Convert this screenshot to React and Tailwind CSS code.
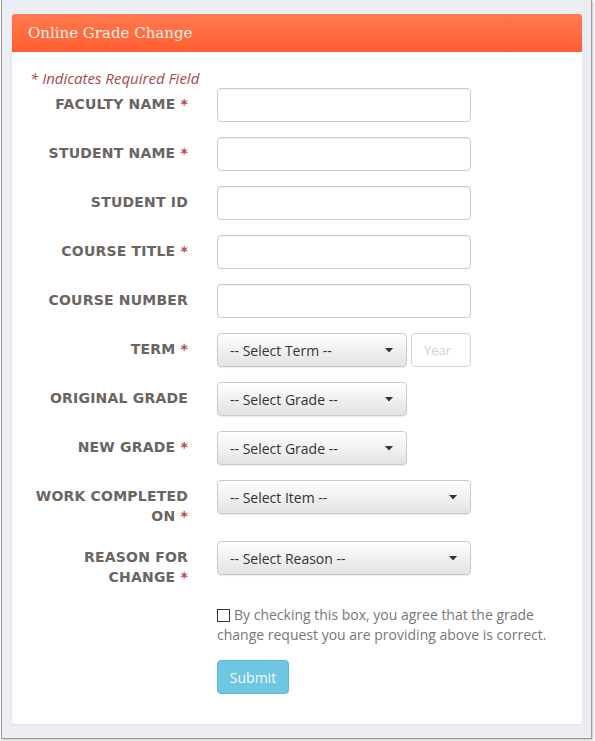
import React from "react";

const font = { fontFamily: '"Open Sans", "Liberation Sans", sans-serif' };

function Label({ children, req }) {
  return (
    <div
      className="w-[161px] shrink-0 pt-[6px] text-right text-[14px] font-bold uppercase leading-[20px] tracking-[0.2px] text-[#6b6461]"
      style={{ fontFamily: '"DejaVu Sans", "Liberation Sans", sans-serif' }}
    >
      {children}
      {req && <span className="text-[#b0474a]"> *</span>}
    </div>
  );
}

function TextInput({ w = "w-[254px]" }) {
  return <div className={`${w} h-[34px] rounded-[4px] border border-[#cccccc] bg-white shadow-[inset_0_1px_1px_rgba(0,0,0,0.06)]`} />;
}

function Select({ text, w }) {
  return (
    <div
      className={`${w} flex h-[34px] items-center justify-between rounded-[4px] border border-[#cbcbcb] bg-gradient-to-b from-white to-[#e3e3e3] pl-[12px] pr-[13px] text-[14px] text-[#333] shadow-[0_1px_1px_rgba(0,0,0,0.08)]`}
    >
      <span>{text}</span>
      <svg width="8" height="5" viewBox="0 0 8 5">
        <path d="M0 0 L8 0 L4 4.5 Z" fill="#333" />
      </svg>
    </div>
  );
}

function Row({ label, req, children }) {
  return (
    <div className="flex items-start gap-[29px]">
      <Label req={req}>{label}</Label>
      <div className="flex gap-[4px]">{children}</div>
    </div>
  );
}

export default function App() {
  return (
    <div className="h-[741px] w-[595px] bg-white" style={font}>
      <div className="ml-[1px] h-[739px] w-[591px] border-x border-b border-[#9c9c9c] bg-[#eceef4] px-[10px] pt-[14px] shadow-[1px_1px_2px_rgba(0,0,0,0.25)]">
        <div className="h-[710px] w-[570px] rounded-[3px] bg-white shadow-[0_1px_2px_rgba(0,0,0,0.08)]">
          <div
            className="flex h-[38px] items-center rounded-t-[3px] bg-gradient-to-b from-[#ff7a4e] to-[#ff5e30] px-[16px] text-[15px] text-[#fff1e6]"
            style={{ fontFamily: '"DejaVu Serif", "Liberation Serif", serif', fontWeight: 300 }}
          >
            Online Grade Change
          </div>
          <div className="px-[15px] pt-[16px]">
            <div className="pl-[3px] text-[15px] italic leading-[20px] text-[#a64a4d]">* Indicates Required Field</div>
            <div className="flex flex-col gap-[15px]">
              <Row label="Faculty Name" req>
                <TextInput />
              </Row>
              <Row label="Student Name" req>
                <TextInput />
              </Row>
              <Row label="Student ID">
                <TextInput />
              </Row>
              <Row label="Course Title" req>
                <TextInput />
              </Row>
              <Row label="Course Number">
                <TextInput />
              </Row>
              <Row label="Term" req>
                <Select text="-- Select Term --" w="w-[190px]" />
                <div className="flex h-[34px] w-[60px] items-center rounded-[4px] border border-[#d4d4d4] bg-white pl-[12px] pt-[2px] text-[13px] text-[#cfcfcf]">
                  Year
                </div>
              </Row>
              <Row label="Original Grade">
                <Select text="-- Select Grade --" w="w-[190px]" />
              </Row>
              <Row label="New Grade" req>
                <Select text="-- Select Grade --" w="w-[190px]" />
              </Row>
              <Row label={<>Work Completed<br />On</>} req>
                <Select text="-- Select Item --" w="w-[254px]" />
              </Row>
              <Row label={<>Reason For<br />Change</>} req>
                <Select text="-- Select Reason --" w="w-[254px]" />
              </Row>
            </div>
            <div className="ml-[190px] mt-[18px] text-[14px] leading-[20px] text-[#777]">
              <span className="mr-[4px] inline-block h-[13px] w-[13px] translate-y-[2px] border border-[#333] bg-white" />
              By checking this box, you agree that the grade
              <br />
              change request you are providing above is correct.
            </div>
            <div className="ml-[190px] mt-[15px]">
              <div className="flex h-[34px] w-[72px] items-center justify-center rounded-[4px] border border-[#5fb8d3] bg-[#6fc6e0] text-[14px] text-[#f4fbfd]">
                Submit
              </div>
            </div>
          </div>
        </div>
      </div>
    </div>
  );
}
